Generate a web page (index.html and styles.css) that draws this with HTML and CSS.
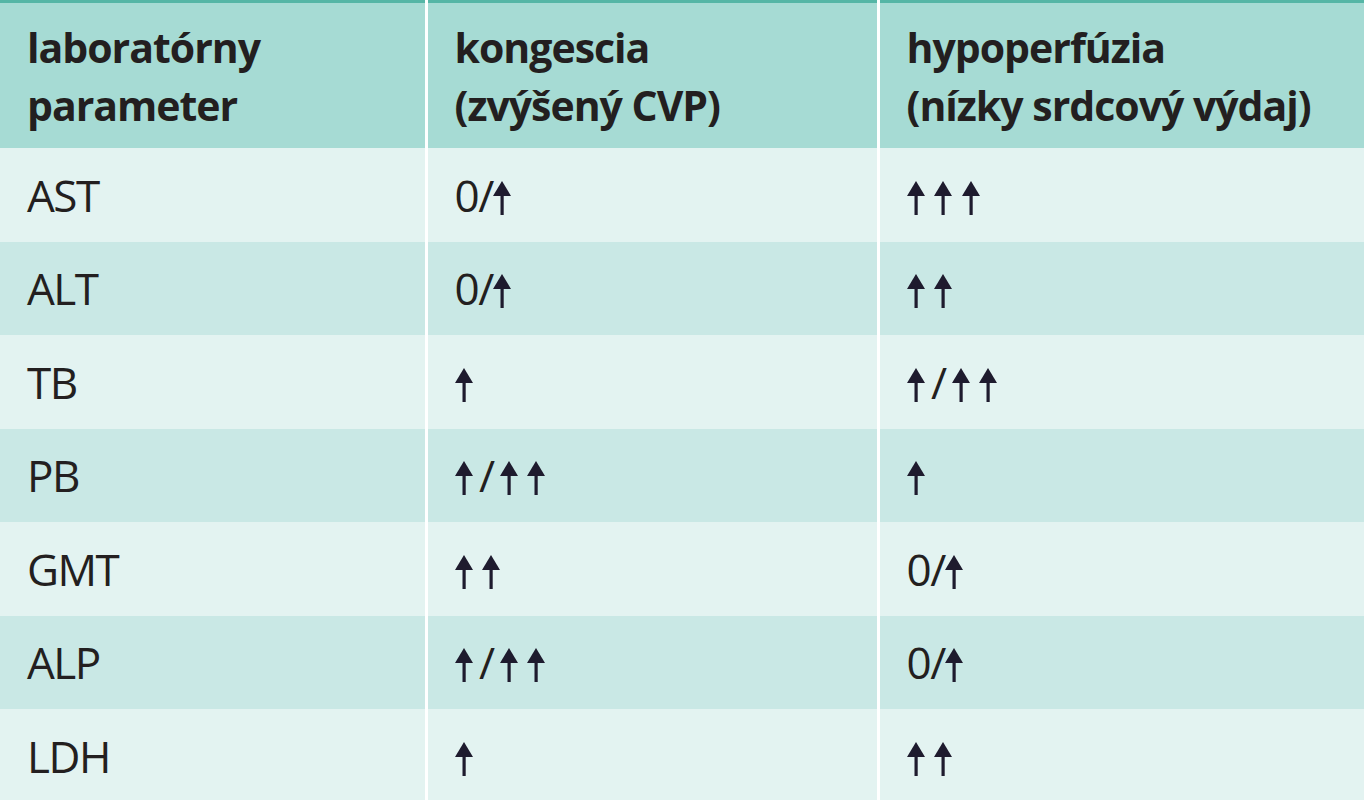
FILE: index.html
```html
<!DOCTYPE html>
<html lang="sk">
<head>
<meta charset="utf-8">
<title>Laboratórne parametre</title>
<link rel="stylesheet" href="styles.css">
</head>
<body>
<svg width="0" height="0" class="defs" aria-hidden="true">
  <defs>
    <symbol id="up" viewBox="0 0 18 34">
      <polygon points="0,15 9,0 18,15"/>
      <rect x="7.5" y="10" width="3.2" height="24"/>
    </symbol>
  </defs>
</svg>
<table class="tbl">
  <colgroup>
    <col class="c1"><col class="c2"><col class="c3">
  </colgroup>
  <thead>
    <tr>
      <th>laboratórny<br>parameter</th>
      <th>kongescia<br>(zvýšený CVP)</th>
      <th>hypoperfúzia<br>(nízky srdcový výdaj)</th>
    </tr>
  </thead>
  <tbody>
    <tr class="light">
      <td>AST</td>
      <td>0/<svg class="ar"><use href="#up"/></svg></td>
      <td><svg class="ar"><use href="#up"/></svg><svg class="ar"><use href="#up"/></svg><svg class="ar"><use href="#up"/></svg></td>
    </tr>
    <tr class="dark">
      <td>ALT</td>
      <td>0/<svg class="ar"><use href="#up"/></svg></td>
      <td><svg class="ar"><use href="#up"/></svg><svg class="ar"><use href="#up"/></svg></td>
    </tr>
    <tr class="light">
      <td>TB</td>
      <td><svg class="ar"><use href="#up"/></svg></td>
      <td><svg class="ar"><use href="#up"/></svg><span class="sl">/</span><svg class="ar"><use href="#up"/></svg><svg class="ar"><use href="#up"/></svg></td>
    </tr>
    <tr class="dark">
      <td>PB</td>
      <td><svg class="ar"><use href="#up"/></svg><span class="sl">/</span><svg class="ar"><use href="#up"/></svg><svg class="ar"><use href="#up"/></svg></td>
      <td><svg class="ar"><use href="#up"/></svg></td>
    </tr>
    <tr class="light">
      <td>GMT</td>
      <td><svg class="ar"><use href="#up"/></svg><svg class="ar"><use href="#up"/></svg></td>
      <td>0/<svg class="ar"><use href="#up"/></svg></td>
    </tr>
    <tr class="dark">
      <td>ALP</td>
      <td><svg class="ar"><use href="#up"/></svg><span class="sl">/</span><svg class="ar"><use href="#up"/></svg><svg class="ar"><use href="#up"/></svg></td>
      <td>0/<svg class="ar"><use href="#up"/></svg></td>
    </tr>
    <tr class="light">
      <td>LDH</td>
      <td><svg class="ar"><use href="#up"/></svg></td>
      <td><svg class="ar"><use href="#up"/></svg><svg class="ar"><use href="#up"/></svg></td>
    </tr>
  </tbody>
</table>
</body>
</html>
```
FILE: styles.css
```css
html, body {
  margin: 0;
  padding: 0;
  background: #ffffff;
}
body {
  font-family: "Open Sans", "Noto Sans", sans-serif;
  color: #231f20;
  overflow: hidden;
}
.defs {
  position: absolute;
  width: 0;
  height: 0;
}
.tbl {
  width: 100%;
  border-collapse: collapse;
  border-spacing: 0;
  table-layout: fixed;
  border-top: 3px solid #55b6a6;
}
.c1 { width: 426px; }
.c2 { width: 452px; }
.tbl th,
.tbl td {
  text-align: left;
  vertical-align: middle;
  padding: 0 0 0 27px;
  white-space: nowrap;
}
.tbl th + th,
.tbl td + td {
  border-left: 3px solid #ffffff;
}
.tbl th {
  background: #a6dbd4;
  font-weight: 700;
  font-size: 41px;
  letter-spacing: -1px;
  line-height: 58px;
  height: 145px;
}
.tbl td {
  font-size: 44px;
  letter-spacing: -1.5px;
  height: 93.5px;
  line-height: 50px;
}
.tbl tr.light td { background: #e3f3f1; }
.tbl tr.dark td { background: #c9e8e5; }
.ar {
  display: inline-block;
  width: 18px;
  height: 34px;
  margin-right: 9.5px;
  fill: #1e1b2e;
  vertical-align: -3px;
}
.sl {
  display: inline-block;
  margin-right: 6px;
  margin-left: -3px;
}
```
